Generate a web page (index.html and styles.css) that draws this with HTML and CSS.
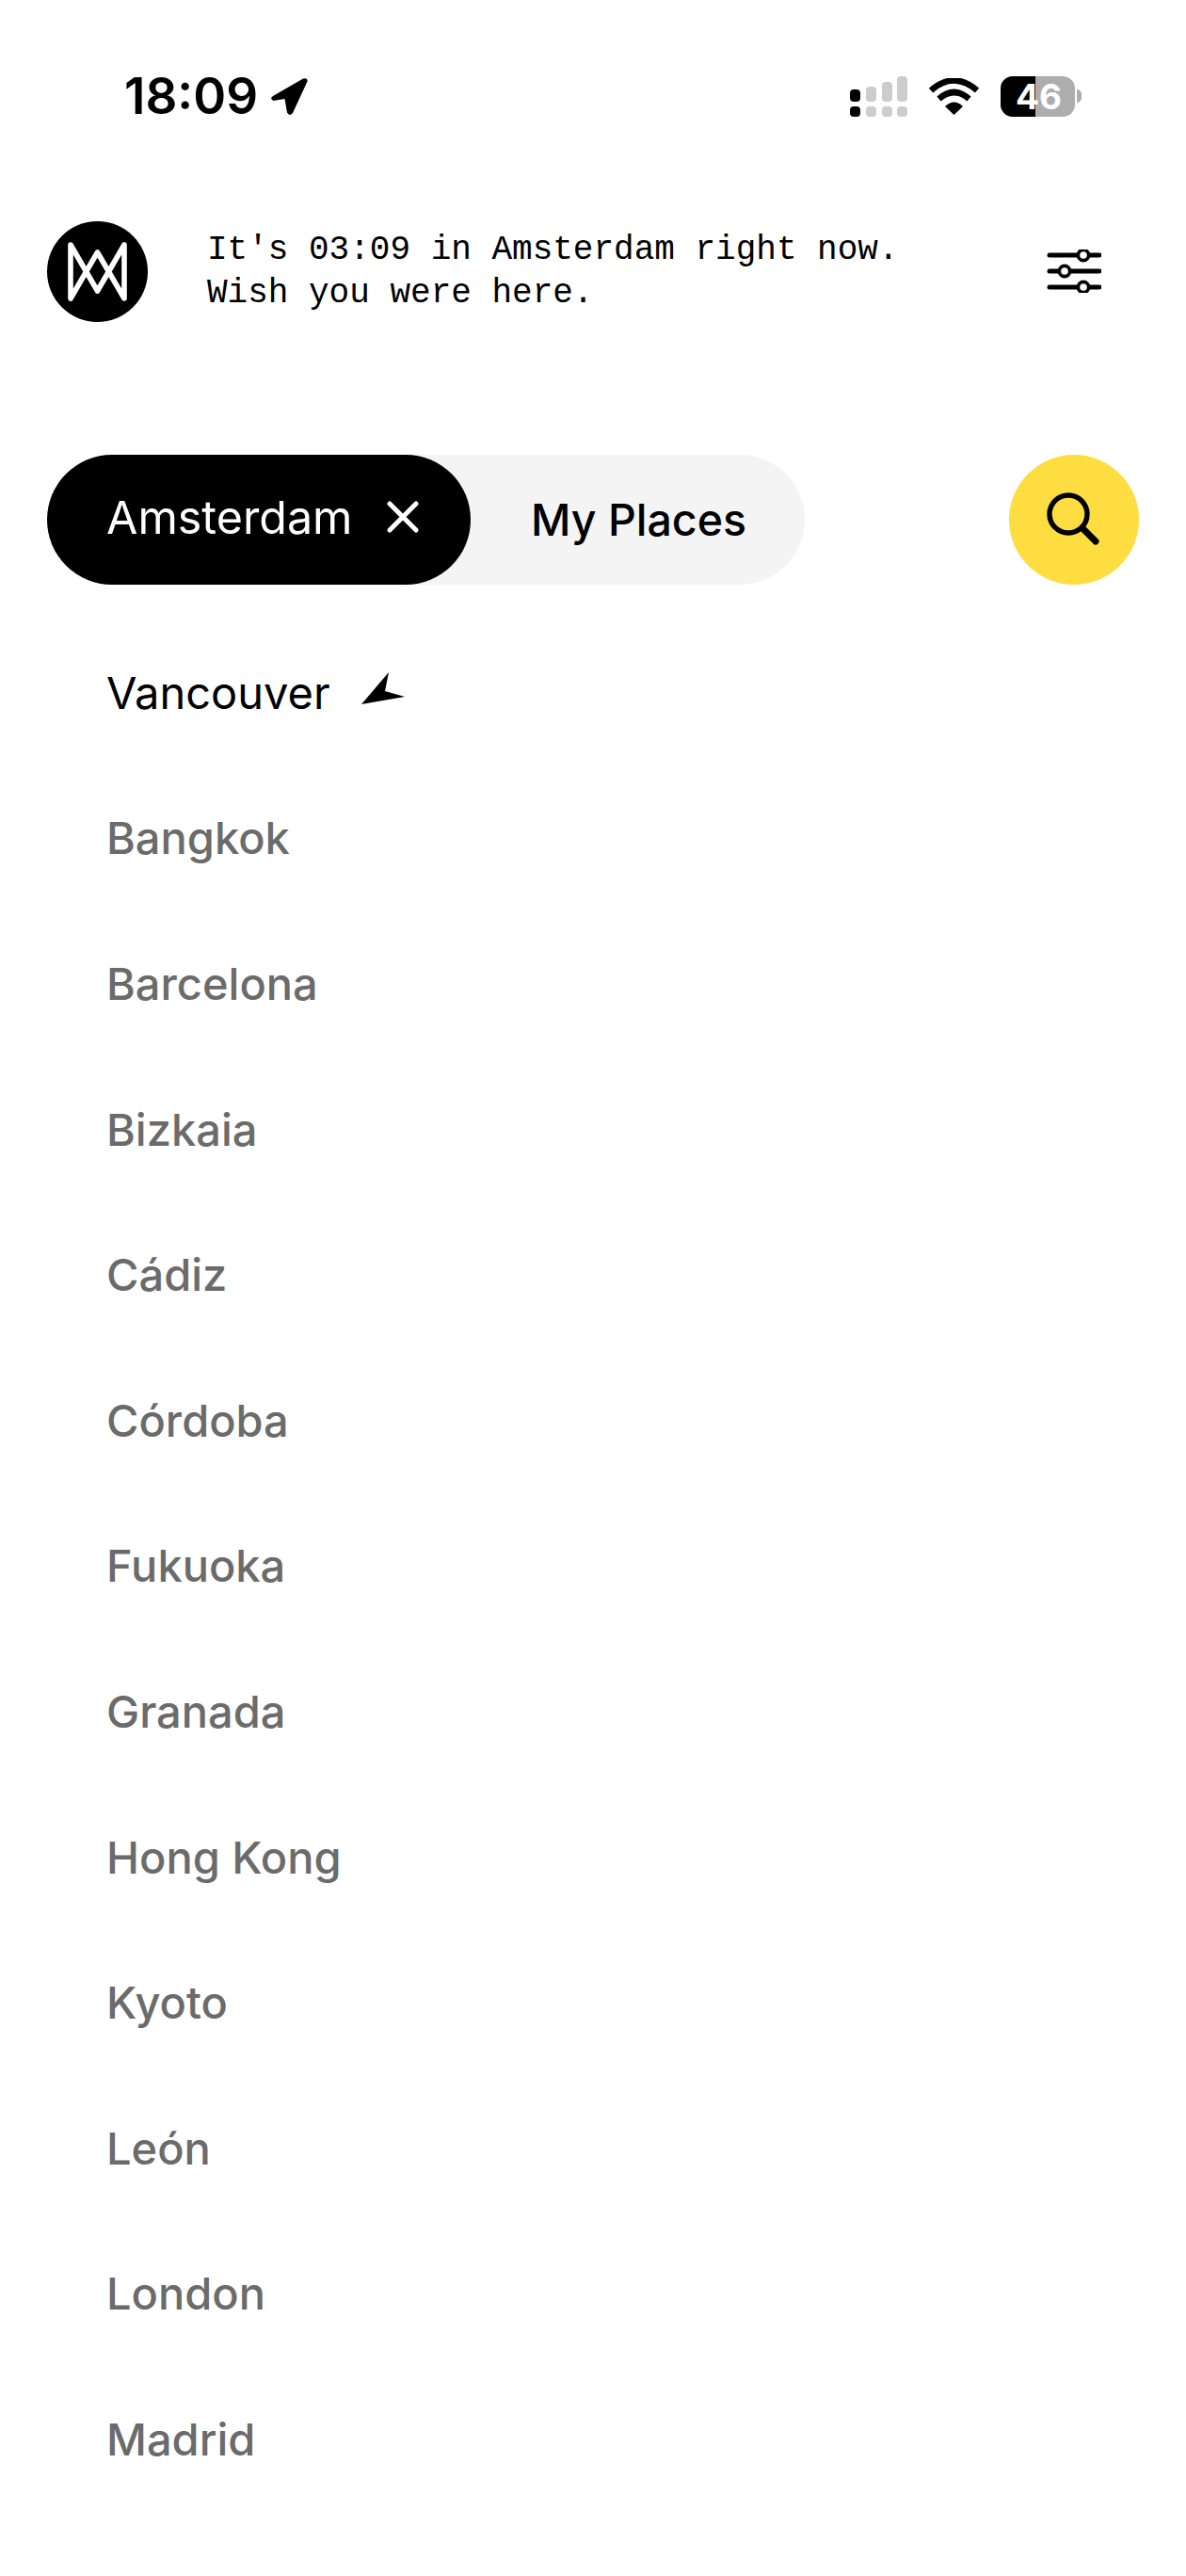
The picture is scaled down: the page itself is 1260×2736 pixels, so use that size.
FILE: index.html
```html
<!DOCTYPE html>
<html lang="en">
<head>
<meta charset="utf-8">
<title>Cities</title>
<link rel="stylesheet" href="styles.css">
</head>
<body>
<div class="status">
  <div class="status-left">
    <span class="time">18:09</span>
    <svg class="loc" viewBox="0 0 41 41"><path d="M3 20 L35 1.5 Q40 0 39.5 4.5 L24 38 Q20.500 42 18 37.500 L15.500 23 L3.500 25 Q-1 23 3 20 Z" fill="#000"/></svg>
  </div>
  <div class="status-right">
    <svg class="signal" viewBox="0 0 61 43">
      <rect x="0" y="14" width="11" height="13" rx="4" fill="#000"/>
      <rect x="17" y="11" width="11" height="16" rx="4" fill="#ccc"/>
      <rect x="34" y="6" width="11" height="21" rx="4" fill="#ccc"/>
      <rect x="50" y="0" width="11" height="27" rx="4" fill="#ccc"/>
      <rect x="0" y="32" width="11" height="11" rx="4" fill="#000"/>
      <rect x="17" y="32" width="11" height="11" rx="4" fill="#ccc"/>
      <rect x="34" y="32" width="11" height="11" rx="4" fill="#ccc"/>
      <rect x="50" y="32" width="11" height="11" rx="4" fill="#ccc"/>
    </svg>
    <svg class="wifi" viewBox="0 0 53 39">
      <path d="M2 13 Q26.500 -8 51 13" fill="none" stroke="#000" stroke-width="6.5" stroke-linejoin="round"/>
      <path d="M10.500 22 Q26.500 8 42.500 22" fill="none" stroke="#000" stroke-width="6.5"/>
      <path d="M17 30 Q26.500 21 36 30 L26.500 39 Z" fill="#000"/>
    </svg>
    <div class="battery">
      <div class="battery-body"><span class="battery-level"></span><span class="battery-text">46</span></div>
      <span class="battery-cap"></span>
    </div>
  </div>
</div>

<header class="intro">
  <div class="logo">
    <svg viewBox="0 0 107 107"><path d="M25 82 V25 L53.500 74 L82 25 V82 L53.500 33 Z" fill="none" stroke="#fff" stroke-width="5.600" stroke-linejoin="round"/></svg>
  </div>
  <p class="greeting">It's 03:09 in Amsterdam right now.<br>Wish you were here.</p>
  <svg class="filters" viewBox="0 0 58 46">
    <g stroke="#000" stroke-width="5" stroke-linecap="round" fill="none">
      <path d="M3 6 H56"/><path d="M3 23 H56"/><path d="M3 40 H56"/>
    </g>
    <g stroke="#000" stroke-width="3.6" fill="#fff">
      <circle cx="39" cy="6" r="5.600"/><circle cx="19" cy="23" r="5.600"/><circle cx="39" cy="40" r="5.600"/>
    </g>
  </svg>
</header>

<div class="controls">
  <div class="tabs">
    <div class="tab-active">
      <span>Amsterdam</span>
      <svg class="close" viewBox="0 0 34 34"><path d="M3 3 L31 31 M31 3 L3 31" stroke="#fff" stroke-width="5" stroke-linecap="round"/></svg>
    </div>
    <div class="tab">My Places</div>
  </div>
  <button class="search" aria-label="Search">
    <svg viewBox="0 0 58 58"><circle cx="23" cy="23" r="20" fill="none" stroke="#000" stroke-width="5.400"/><path d="M38 38 L52 52" stroke="#000" stroke-width="7" stroke-linecap="round"/></svg>
  </button>
</div>

<ul class="cities">
  <li class="city current">Vancouver <svg class="arrow" viewBox="0 0 46 36"><path d="M0 35 L29 1 L25 21 L46 27 Z" fill="#000"/></svg></li>
  <li class="city">Bangkok</li>
  <li class="city">Barcelona</li>
  <li class="city">Bizkaia</li>
  <li class="city">Cádiz</li>
  <li class="city">Córdoba</li>
  <li class="city">Fukuoka</li>
  <li class="city">Granada</li>
  <li class="city">Hong Kong</li>
  <li class="city">Kyoto</li>
  <li class="city">León</li>
  <li class="city">London</li>
  <li class="city">Madrid</li>
</ul>
</body>
</html>
```
FILE: styles.css
```css
* { box-sizing: border-box; }
html, body { margin: 0; padding: 0; background: #fff; }
body { width: 1260px; height: 2736px; overflow: hidden; font-family: Inter, "Liberation Sans", sans-serif; color: #000; }

.status { display: flex; justify-content: space-between; align-items: center; height: 204px; padding: 0 111px 0 132px; }
.status-left { display: flex; align-items: center; gap: 13px; }
.time { font-size: 53px; font-weight: 600; line-height: 1; }
.loc { width: 41px; height: 41px; }
.status-right { display: flex; align-items: center; }
.signal { width: 61px; height: 43px; }
.wifi { width: 53px; height: 39px; margin-left: 23px; }
.battery { display: flex; align-items: center; margin-left: 23px; }
.battery-body { position: relative; width: 79px; height: 43px; border-radius: 13px; background: #adadad; overflow: hidden; display: flex; align-items: center; justify-content: center; }
.battery-level { position: absolute; left: 0; top: 0; bottom: 0; width: 37px; background: #000; }
.battery-text { position: relative; color: #fff; font-size: 37px; font-weight: 700; line-height: 1; margin-left: 2px; }
.battery-cap { width: 5px; height: 14px; margin-left: 2px; background: #adadad; border-radius: 0 6px 6px 0; }

.intro { display: flex; align-items: center; height: 106px; margin-top: 31px; padding: 0 50px; }
.logo { width: 107px; height: 107px; border-radius: 50%; background: #000; flex: none; }
.logo svg { display: block; width: 107px; height: 107px; }
.greeting { flex: 1; margin: 2px 0 0 63px; font-family: "Liberation Mono", monospace; font-size: 36px; line-height: 46px; }
.filters { width: 58px; height: 46px; margin-right: 40px; flex: none; }

.controls { display: flex; justify-content: space-between; align-items: center; margin-top: 142px; padding: 0 50px; }
.tabs { display: flex; width: 805px; height: 138px; background: #f4f4f4; border-radius: 69px; }
.tab-active { display: flex; align-items: center; gap: 36px; width: 450px; height: 138px; padding: 0 0 6px 63px; background: #000; color: #fff; border-radius: 69px; font-size: 48.400px; }
.close { width: 34px; height: 34px; }
.tab { display: flex; align-items: center; padding-left: 64px; font-size: 46.500px; font-weight: 450; }
.search { display: flex; align-items: center; justify-content: center; width: 138px; height: 138px; padding: 0; border: 0; border-radius: 50%; background: #fddd40; }
.search svg { width: 58px; height: 58px; }

.cities { list-style: none; margin: 37px 0 0; padding: 0 0 0 113px; }
.city { display: flex; align-items: center; height: 154.600px; font-size: 47px; font-weight: 450; color: #6b6b6b; }
.current { color: #000; font-weight: 400; }
.arrow { width: 46px; height: 36px; margin: 0 0 8px 33px; }
```
